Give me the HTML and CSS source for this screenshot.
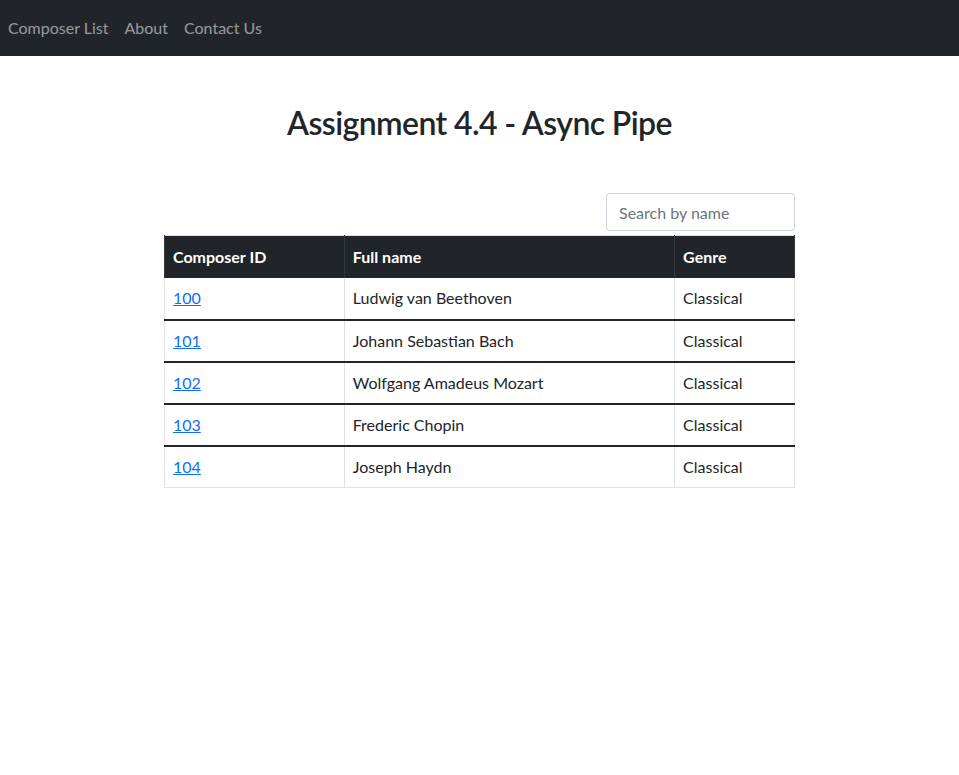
FILE: index.html
```html
<!DOCTYPE html>
<html lang="en">
<head>
<meta charset="utf-8">
<title>Composer List</title>
<link rel="stylesheet" href="styles.css">
</head>
<body>
<nav class="navbar">
  <a class="nav-link" href="#">Composer List</a>
  <a class="nav-link" href="#">About</a>
  <a class="nav-link" href="#">Contact Us</a>
</nav>
<main class="content">
  <h2 class="title">Assignment 4.4 - Async Pipe</h2>
  <div class="search-row">
    <input class="search" type="text" placeholder="Search by name">
  </div>
  <table class="composers">
    <thead>
      <tr><th class="c-id">Composer ID</th><th class="c-name">Full name</th><th class="c-genre">Genre</th></tr>
    </thead>
    <tbody>
      <tr><td><a href="#">100</a></td><td>Ludwig van Beethoven</td><td>Classical</td></tr>
    </tbody>
    <tbody>
      <tr><td><a href="#">101</a></td><td>Johann Sebastian Bach</td><td>Classical</td></tr>
    </tbody>
    <tbody>
      <tr><td><a href="#">102</a></td><td>Wolfgang Amadeus Mozart</td><td>Classical</td></tr>
    </tbody>
    <tbody>
      <tr><td><a href="#">103</a></td><td>Frederic Chopin</td><td>Classical</td></tr>
    </tbody>
    <tbody>
      <tr><td><a href="#">104</a></td><td>Joseph Haydn</td><td>Classical</td></tr>
    </tbody>
  </table>
</main>
</body>
</html>
```
FILE: styles.css
```css
* { box-sizing: border-box; }
body {
  margin: 0;
  font-family: Lato, "Noto Sans", sans-serif;
  font-size: 16px;
  line-height: 1.5;
  color: #212529;
  background: #fff;
}
.navbar {
  height: 56px;
  background: #212529;
  display: flex;
  align-items: center;
  padding: 0 0 0 8px;
  gap: 16px;
}
.nav-link {
  color: rgba(255,255,255,0.55);
  text-decoration: none;
}
.content {
  width: 631px;
  margin: 0 auto;
}
.title {
  margin: 48px 0 0;
  text-align: center;
  font-size: 32px;
  font-weight: 600;
  letter-spacing: -0.6px;
  line-height: 1.2;
}
.search-row {
  display: flex;
  justify-content: flex-end;
  margin-top: 51px;
  margin-bottom: 4px;
}
.search {
  width: 189px;
  height: 38px;
  padding: 6px 12px;
  font: inherit;
  color: #212529;
  border: 1px solid #ced4da;
  border-radius: 4px;
}
.search::placeholder { color: #6c757d; }
.composers {
  width: 631px;
  border-collapse: collapse;
  border: 1px solid #dee2e6;
}
.composers th, .composers td {
  padding: 8px;
  height: 42px;
  text-align: left;
  border-left: 1px solid #dee2e6;
  border-right: 1px solid #dee2e6;
}
.composers thead th {
  background: #212529;
  color: #fff;
  font-weight: 700;
  border-color: #32383e;
}
.composers tbody + tbody { border-top: 2px solid #212529; }
.c-id { width: 180px; }
.c-name { width: 331px; }
.c-genre { width: 120px; }
.composers a { color: #0d6efd; }
```
